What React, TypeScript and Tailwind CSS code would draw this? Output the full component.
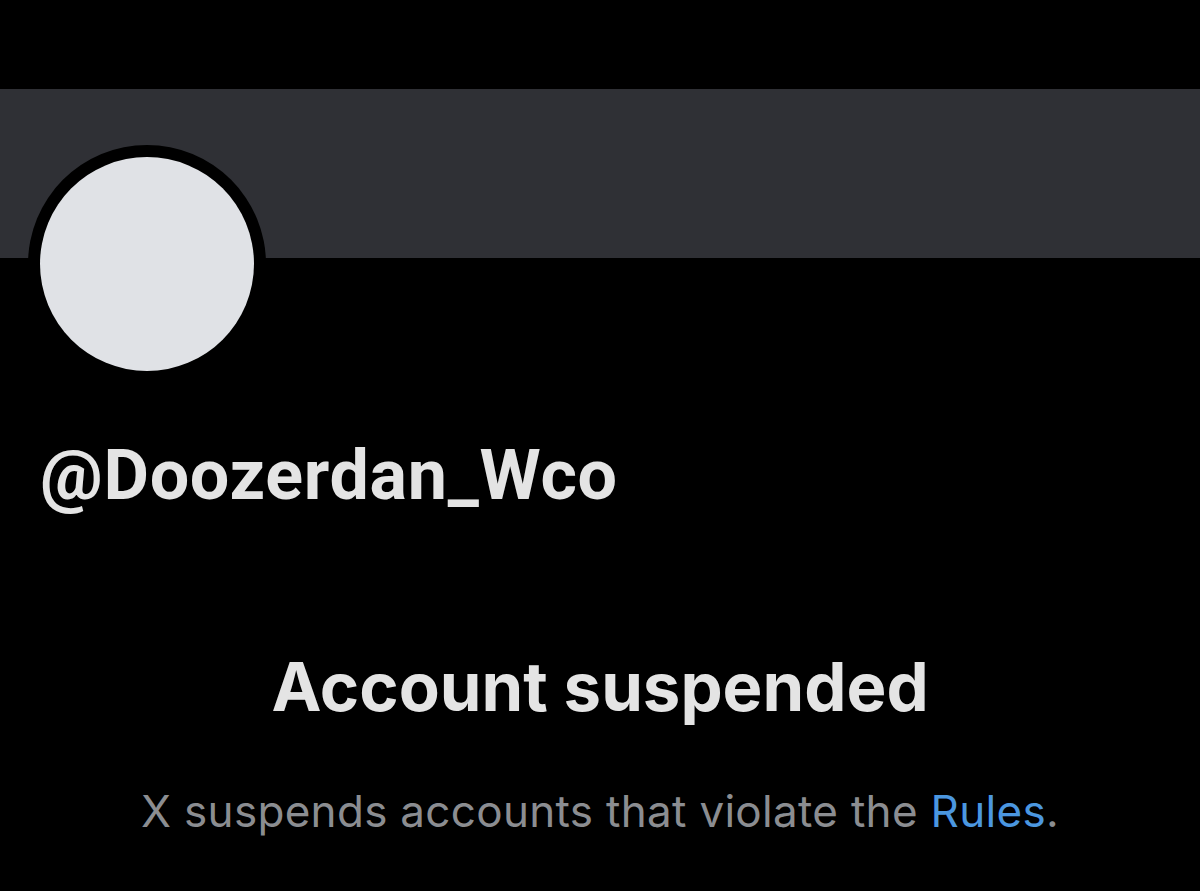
import React from "react";

export default function App() {
  return (
    <div
      className="relative w-[1200px] h-[891px] bg-black overflow-hidden"
      style={{ fontFamily: "Inter, 'Noto Sans', sans-serif" }}
    >
      <div className="h-[89px] bg-black" />
      <div className="h-[169px] bg-[#2f3035]" />
      <div className="absolute left-[28px] top-[145px] w-[238px] h-[238px] rounded-full bg-black p-[12px]">
        <div className="w-full h-full rounded-full bg-[#e0e2e6]" />
      </div>
      <div className="pt-[182px] pl-[40px]">
        <div
          className="text-[70px] leading-none font-bold text-[#e4e4e4] tracking-[0.7px]"
          style={{ fontFamily: "Roboto, 'Noto Sans', sans-serif" }}
        >
          @Doozerdan_Wco
        </div>
      </div>
      <div className="mt-[143px] flex flex-col items-center">
        <div className="text-[67px] leading-none font-bold text-[#e4e4e4] tracking-[0px]">
          Account suspended
        </div>
        <div className="mt-[69px] text-[44px] leading-none font-normal text-[#8b8d91] tracking-[0.3px]">
          X suspends accounts that violate the{" "}
          <span className="text-[#4b97e0]">Rules</span>.
        </div>
      </div>
    </div>
  );
}
